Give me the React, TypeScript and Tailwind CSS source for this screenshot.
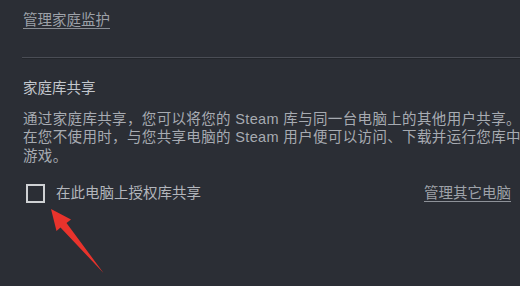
export default function App() {
  return (
    <div
      className="relative h-[286px] w-[520px] overflow-hidden bg-[#2b2e35] text-[14.5px]"
      style={{ fontFamily: '"Liberation Sans", "Noto Sans CJK SC", sans-serif' }}
    >
      <div className="pl-[23px] pt-[10px]">
        <a className="leading-[20px] text-[#9da1a8] underline decoration-[#8a8e95] underline-offset-[3px]">
          管理家庭监护
        </a>
      </div>

      <div className="ml-[22px] mt-[25px] border-t border-b border-t-[#4a4d55] border-b-[#23262b]" />

      <div className="pl-[23px] pt-[19px]">
        <h3 className="leading-[20px] text-[#c3c7cd]">家庭库共享</h3>
        <p className="mt-[12px] whitespace-nowrap leading-[18.5px] tracking-[0.35px] text-[#a7abb2]">
          通过家庭库共享，您可以将您的 Steam 库与同一台电脑上的其他用户共享。
          <br />
          在您不使用时，与您共享电脑的 Steam 用户便可以访问、下载并运行您库中
          <br />
          游戏。
        </p>

        <div className="mt-[18px] flex items-center pr-[9px]">
          <span className="h-[19px] w-[19px] shrink-0 translate-x-[3px] border-2 border-[#cfd1d4]" />
          <span className="ml-[14px] leading-[20px] text-[#b3b6bc]">在此电脑上授权库共享</span>
          <a className="ml-auto leading-[20px] text-[#9ea2a9] underline decoration-[#8e9299] underline-offset-[3px]">
            管理其它电脑
          </a>
        </div>
      </div>

      <svg
        className="absolute left-0 top-0"
        width="520"
        height="286"
        viewBox="0 0 520 286"
      >
        <polygon
          points="51,209 71,219.5 66.5,223 103.5,273 60.5,227.5 56.5,231"
          fill="#e8332c"
        />
      </svg>
    </div>
  );
}
